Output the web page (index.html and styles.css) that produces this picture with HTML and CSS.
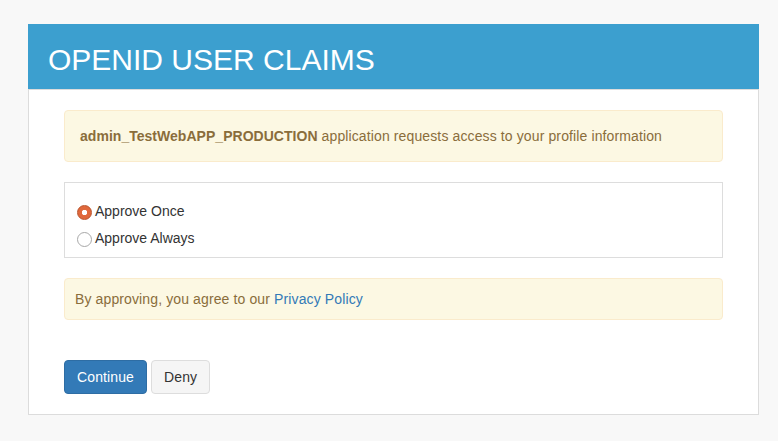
FILE: index.html
```html
<!DOCTYPE html>
<html>
<head>
<meta charset="utf-8">
<link rel="stylesheet" href="styles.css">
</head>
<body>
<div class="card">
  <div class="card-header"><h1 class="title">OPENID USER CLAIMS</h1></div>
  <div class="card-body">
    <div class="alert alert-main"><strong>admin_TestWebAPP_PRODUCTION</strong> application requests access to your profile information</div>
    <div class="choices">
      <label class="choice"><input type="radio" name="approve" class="radio" checked><span>Approve Once</span></label>
      <label class="choice"><input type="radio" name="approve" class="radio"><span>Approve Always</span></label>
    </div>
    <div class="alert alert-small">By approving, you agree to our <a class="link" href="#">Privacy Policy</a></div>
    <div class="actions">
      <button class="btn btn-primary">Continue</button>
      <button class="btn btn-default">Deny</button>
    </div>
  </div>
</div>
</body>
</html>
```
FILE: styles.css
```css
html, body {
  margin: 0;
  padding: 0;
  background: #f8f8f8;
  font-family: "Liberation Sans", Arial, sans-serif;
  font-size: 14px;
  line-height: 20px;
  color: #333;
}
body {
  padding: 24px 19px 0 28px;
}
.card {
  background: #fff;
  border: 1px solid #dcdcdc;
  border-top: 0;
  width: 729px;
}
.card-header {
  background: #3c9fcf;
  height: 65px;
  margin: 0 -1px;
  padding: 0 20px;
  display: flex;
  align-items: center;
  border-bottom: 1px solid #dcdcdc;
}
.title {
  margin: 0;
  font-weight: normal;
  font-size: 30px;
  line-height: 34px;
  color: #fff;
  padding-top: 7px;
}
.card-body {
  padding: 20px 35px 20px 35px;
}
.alert {
  background: #fcf8e3;
  border: 1px solid #faebcc;
  border-radius: 4px;
  color: #8a6d3b;
  letter-spacing: 0.12px;
}
.alert-main {
  padding: 15px 15px;
}
.alert-main strong {
  font-weight: bold;
  letter-spacing: 0.03px;
}
.alert-small {
  padding: 10px 10px;
}
.link {
  color: #337ab7;
  text-decoration: none;
}
.choices {
  margin-top: 20px;
  border: 1px solid #dddddd;
  padding: 18px 11px 9px;
  display: flex;
  flex-direction: column;
  gap: 7px;
  margin-bottom: 20px;
}
.choice {
  display: flex;
  align-items: center;
  height: 20px;
  color: #333;
}
.radio {
  appearance: none;
  -webkit-appearance: none;
  width: 15px;
  height: 15px;
  margin: 3px 3px 0 1px;
  border-radius: 50%;
  border: 1px solid #a8a8a8;
  background: #fff;
  flex: none;
}
.radio:checked {
  border-color: #b9522b;
  background: radial-gradient(circle at 50% 50%, #fff 0 2.4px, #e0683c 3px);
}
.actions {
  margin-top: 40px;
  display: flex;
  gap: 4px;
}
.btn {
  font-family: "Liberation Sans", Arial, sans-serif;
  font-size: 14px;
  line-height: 20px;
  letter-spacing: 0.12px;
  padding: 6px 12px;
  border-radius: 4px;
  border: 1px solid transparent;
  margin: 0;
}
.btn-primary {
  background: #337ab7;
  border-color: #2e6da4;
  color: #fff;
}
.btn-default {
  background: #f5f5f5;
  border-color: #dddddd;
  color: #333;
}
```
